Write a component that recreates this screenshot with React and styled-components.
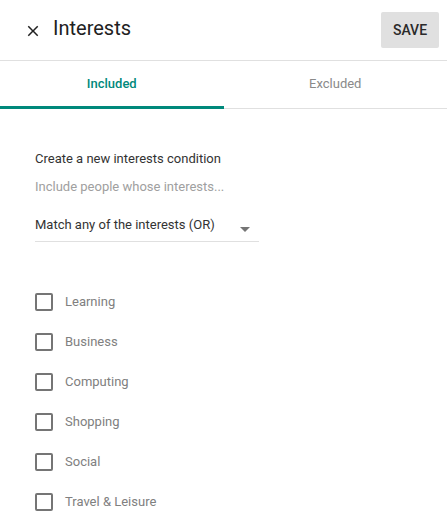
import React, { useState } from "react";
import styled, { createGlobalStyle } from "styled-components";

const Global = createGlobalStyle`
  html, body { margin: 0; padding: 0; background: #fff; }
  body { font-family: Roboto, "Noto Sans", Arial, sans-serif; -webkit-font-smoothing: antialiased; }
  * { box-sizing: border-box; }
`;

const Page = styled.div`
  width: 447px;
  min-height: 526px;
  background: #fff;
`;

const Header = styled.header`
  height: 61px;
  display: flex;
  align-items: center;
  padding: 0 8px 0 24px;
  border-bottom: 1px solid #e0e0e0;
`;

const CloseButton = styled.button`
  width: 18px;
  height: 18px;
  padding: 0;
  margin: 2px 0 0 0;
  border: none;
  background: none;
  display: flex;
  color: #212121;
  cursor: pointer;
`;

const Title = styled.h1`
  margin: 0 0 5px 11px;
  font-size: 20px;
  font-weight: 400;
  color: #212121;
  flex: 1;
  line-height: 24px;
`;

const SaveButton = styled.button`
  width: 58px;
  height: 36px;
  border: none;
  border-radius: 2px;
  background: #e0e0e0;
  color: #2a2a2a;
  font-family: inherit;
  font-size: 14px;
  font-weight: 500;
  text-transform: uppercase;
  padding: 0;
  margin-bottom: 1px;
`;

const TabBar = styled.div`
  position: relative;
  display: flex;
  height: 48px;
  border-bottom: 1px solid #e0e0e0;
`;

const Tab = styled.button`
  flex: 1;
  border: none;
  background: none;
  font-family: inherit;
  font-size: 13px;
  font-weight: ${(p) => (p.$active ? 500 : 400)};
  color: ${(p) => (p.$active ? "#00897b" : "#8a8a8a")};
  padding: 0 0 3px 0;
  cursor: pointer;
`;

const Indicator = styled.div`
  position: absolute;
  bottom: -1px;
  left: ${(p) => (p.$index === 0 ? "0" : "50%")};
  width: 50%;
  height: 3px;
  background: #00897b;
`;

const Content = styled.div`
  padding: 42px 0 0 35px;
`;

const Heading = styled.div`
  font-size: 13px;
  color: #333333;
  line-height: 16px;
`;

const Hint = styled.div`
  font-size: 13px;
  color: #a0a0a0;
  line-height: 16px;
  margin-top: 12px;
`;

const Select = styled.div`
  width: 224px;
  height: 30px;
  margin-top: 17px;
  display: flex;
  align-items: center;
  justify-content: space-between;
  border-bottom: 1px solid #e0e0e0;
  font-size: 13px;
  color: #333333;
  padding-bottom: 4px;
`;

const Arrow = styled.svg`
  width: 24px;
  height: 24px;
  margin-right: 2px;
  margin-top: 8px;
  fill: #757575;
`;

const List = styled.div`
  margin-top: 40px;
  display: flex;
  flex-direction: column;
`;

const Row = styled.label`
  height: 40px;
  display: flex;
  align-items: center;
  cursor: pointer;
`;

const Box = styled.span`
  width: 18px;
  height: 18px;
  border: 2px solid #757575;
  border-radius: 2px;
  display: inline-block;
  background: ${(p) => (p.$checked ? "#757575" : "transparent")};
`;

const Label = styled.span`
  margin-left: 12px;
  font-size: 13px;
  color: #808080;
  margin-bottom: 1px;
`;

const interests = ["Learning", "Business", "Computing", "Shopping", "Social", "Travel & Leisure"];

export default function App() {
  const [tab, setTab] = useState(0);
  const [checked, setChecked] = useState({});
  return (
    <Page>
      <Global />
      <Header>
        <CloseButton aria-label="Close">
          <svg width="18" height="18" viewBox="0 0 24 24" fill="currentColor">
            <path d="M19 6.41L17.59 5 12 10.59 6.41 5 5 6.41 10.59 12 5 17.59 6.41 19 12 13.41 17.59 19 19 17.59 13.41 12z" />
          </svg>
        </CloseButton>
        <Title>Interests</Title>
        <SaveButton>Save</SaveButton>
      </Header>
      <TabBar>
        <Tab $active={tab === 0} onClick={() => setTab(0)}>Included</Tab>
        <Tab $active={tab === 1} onClick={() => setTab(1)}>Excluded</Tab>
        <Indicator $index={tab} />
      </TabBar>
      <Content>
        <Heading>Create a new interests condition</Heading>
        <Hint>Include people whose interests...</Hint>
        <Select>
          <span>Match any of the interests (OR)</span>
          <Arrow viewBox="0 0 24 24">
            <path d="M7 10l5 5 5-5z" />
          </Arrow>
        </Select>
        <List>
          {interests.map((name) => (
            <Row key={name} onClick={() => setChecked((c) => ({ ...c, [name]: !c[name] }))}>
              <Box $checked={!!checked[name]} />
              <Label>{name}</Label>
            </Row>
          ))}
        </List>
      </Content>
    </Page>
  );
}
